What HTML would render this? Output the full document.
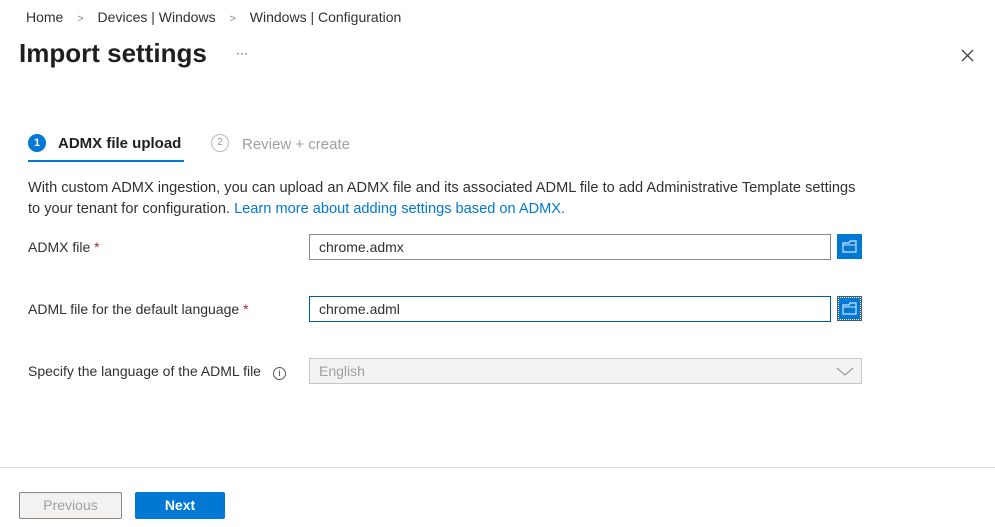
<!DOCTYPE html>
<html><head><style>
body{margin:0;width:995px;height:527px;background:#fff;font-family:"Liberation Sans",sans-serif;color:#323130;position:relative;overflow:hidden}
.a{position:absolute;white-space:nowrap}
.inp{position:absolute;left:309px;width:511px;height:24px;border:1px solid #8a8886;font-size:14px;line-height:24px;padding-left:9px;box-sizing:content-box}
.fb{position:absolute;left:837px;width:25px;height:25px;background:#0078d4}
</style></head><body>
<div class="a" style="left:26px;top:9px;font-size:14px">Home <span style="color:#888;margin:0 10px;font-size:11px">&gt;</span> Devices | Windows <span style="color:#888;margin:0 10px;font-size:11px">&gt;</span> Windows | Configuration</div>
<div class="a" style="left:19px;top:38px;font-size:26px;font-weight:600;color:#201f1e">Import settings</div>
<div class="a" style="left:236px;top:46px;font-size:12px">···</div>
<svg class="a" style="left:961px;top:49px" width="13" height="13"><path d="M1 1l11 11M12 1L1 12" stroke="#444" stroke-width="1.3"/></svg>
<div class="a" style="left:28px;top:134px;width:18px;height:18px;border-radius:50%;background:#0078d4;color:#fff;font-size:11px;text-align:center;line-height:18px;font-weight:bold">1</div>
<div class="a" style="left:58px;top:135px;font-size:15px;font-weight:600;color:#201f1e">ADMX file upload</div>
<div class="a" style="left:28px;top:160px;width:156px;height:2px;background:#0078d4"></div>
<div class="a" style="left:211px;top:134px;width:16px;height:16px;border-radius:50%;border:1px solid #bbb;color:#999;font-size:10px;text-align:center;line-height:16px">2</div>
<div class="a" style="left:242px;top:136px;font-size:15px;color:#a19f9d">Review + create</div>
<div class="a" style="left:28px;top:178px;font-size:14.6px;line-height:21px">With custom ADMX ingestion, you can upload an ADMX file and its associated ADML file to add Administrative Template settings<br>to your tenant for configuration. <span style="color:#0078d4">Learn more about adding settings based on ADMX.</span></div>
<div class="a" style="left:28px;top:239px;font-size:14px">ADMX file <span style="color:#a4262c">*</span></div>
<div class="inp" style="top:234px">chrome.admx</div>
<div class="fb" style="top:234px"><svg width="25" height="25"><path d="M6 9h6l1-2h6v11H6z" fill="none" stroke="#cfe4fa" stroke-width="1.2"/><path d="M6 11h13" stroke="#cfe4fa"/></svg></div>
<div class="a" style="left:28px;top:301px;font-size:14px">ADML file for the default language <span style="color:#a4262c">*</span></div>
<div class="inp" style="top:296px;border-color:#005a9e">chrome.adml</div>
<div class="fb" style="top:296px;outline:1px dotted #fff;outline-offset:-2px;border:1px solid #555;box-sizing:border-box"><svg width="23" height="23"><path d="M5 8h6l1-2h6v11H5z" fill="none" stroke="#cfe4fa" stroke-width="1.2"/><path d="M5 10h13" stroke="#cfe4fa"/></svg></div>
<div class="a" style="left:28px;top:363px;font-size:14px">Specify the language of the ADML file <span style="display:inline-block;width:11px;height:11px;border:1px solid #555;border-radius:50%;font-size:9px;text-align:center;line-height:11px;margin-left:8px">i</span></div>
<div class="inp" style="top:358px;width:542px;background:#f3f2f1;border-color:#c8c6c4;color:#a19f9d">English</div>
<svg class="a" style="left:836px;top:365px" width="18" height="12"><path d="M1 3l8 7 8-7" fill="none" stroke="#888" stroke-width="1"/></svg>
<div class="a" style="left:0;top:467px;width:995px;height:1px;background:#e1dfdd"></div>
<div class="a" style="left:19px;top:492px;width:101px;height:25px;border:1px solid #8a8886;background:#f3f2f1;color:#a19f9d;font-size:14px;text-align:center;line-height:25px;border-radius:2px">Previous</div>
<div class="a" style="left:135px;top:492px;width:90px;height:27px;background:#0078d4;color:#fff;font-size:14px;font-weight:bold;text-align:center;line-height:26px;border-radius:2px">Next</div>
</body></html>
